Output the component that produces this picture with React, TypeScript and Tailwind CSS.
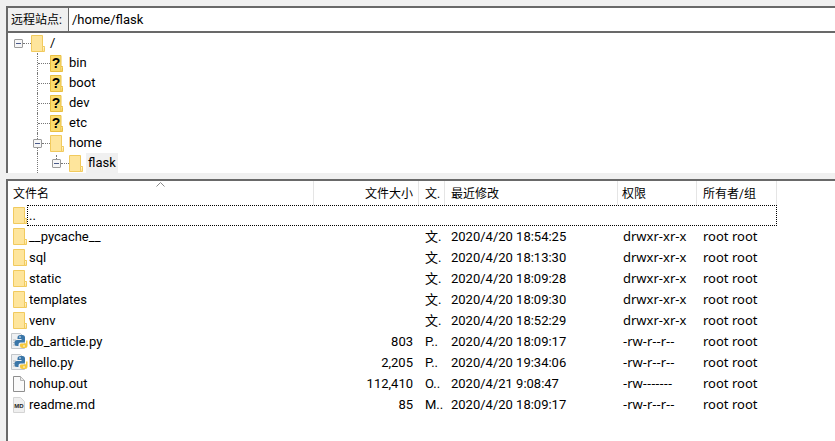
import type { ReactNode } from "react";

const uiFont = "font-['Roboto','Noto_Sans_CJK_SC',sans-serif]";
const wideFont = "font-['Noto_Sans','Noto_Sans_CJK_SC',sans-serif]";

type FileRow = {
  name: string;
  size?: string;
  type: string;
  modified?: string;
  perms?: string;
  owner?: string;
  icon: "folder" | "python" | "file" | "md";
};

const files: FileRow[] = [
  { name: "..", type: "", icon: "folder" },
  { name: "__pycache__", type: "文.", modified: "2020/4/20 18:54:25", perms: "drwxr-xr-x", owner: "root root", icon: "folder" },
  { name: "sql", type: "文.", modified: "2020/4/20 18:13:30", perms: "drwxr-xr-x", owner: "root root", icon: "folder" },
  { name: "static", type: "文.", modified: "2020/4/20 18:09:28", perms: "drwxr-xr-x", owner: "root root", icon: "folder" },
  { name: "templates", type: "文.", modified: "2020/4/20 18:09:30", perms: "drwxr-xr-x", owner: "root root", icon: "folder" },
  { name: "venv", type: "文.", modified: "2020/4/20 18:52:29", perms: "drwxr-xr-x", owner: "root root", icon: "folder" },
  { name: "db_article.py", size: "803", type: "P..", modified: "2020/4/20 18:09:17", perms: "-rw-r--r--", owner: "root root", icon: "python" },
  { name: "hello.py", size: "2,205", type: "P..", modified: "2020/4/20 19:34:06", perms: "-rw-r--r--", owner: "root root", icon: "python" },
  { name: "nohup.out", size: "112,410", type: "O..", modified: "2020/4/21 9:08:47", perms: "-rw-------", owner: "root root", icon: "file" },
  { name: "readme.md", size: "85", type: "M..", modified: "2020/4/20 18:09:17", perms: "-rw-r--r--", owner: "root root", icon: "md" },
];

function FolderIcon() {
  return (
    <svg width="14" height="17" viewBox="0 0 14 17" className="shrink-0">
      <path d="M.5.5h11v11h2v5H.5z" fill="#fee59c" stroke="#f1ca5e" />
      <path d="M11.5 16.500v-5h2" fill="#fff3cc" stroke="#f1ca5e" />
    </svg>
  );
}

function UnknownFolderIcon() {
  return (
    <svg width="13" height="17" viewBox="0 0 13 17" className="shrink-0">
      <path d="M.5.5h10.500v11h1.500v5H.5z" fill="#fbdc6e" stroke="#e9bf42" />
      <path d="M11 16.500v-5h1.500" fill="#fff3cc" stroke="#e9bf42" />
      <text x="6" y="13" textAnchor="middle" fontSize="14" fontWeight="700" fontFamily="Liberation Sans, sans-serif" fill="#000">
        ?
      </text>
    </svg>
  );
}

function PythonIcon() {
  return (
    <svg width="17" height="17" viewBox="0 0 17 17" className="shrink-0">
      <path d="M.5.500h9l4 4v11H.500z" fill="#eef0f2" stroke="#c2c6ca" />
      <path d="M2 7h3M2 9.500h2M2 12h3" stroke="#b4b8bc" />
      <path d="M6.500 9V4.500Q6.500 2 9.500 2h2Q14 2 14 4.500V8q0 1.500-2 1.500H9.500q-2 0-2 2V13H6q-2.500 0-2.500-2.500V9.500Q3.500 7 6 7h4.500V6H6.500z" fill="#3a76a8" />
      <path d="M16.500 7.500v5q0 2.500-2.500 2.500h-2.500q-2.500 0-2.500-2v-1.500q0-1 1.500-1H14q1.500 0 1-3z" fill="#f6c93c" />
      <circle cx="9" cy="4" r=".8" fill="#fff" />
      <circle cx="13" cy="13" r=".8" fill="#fff" />
    </svg>
  );
}

function PlainFileIcon() {
  return (
    <svg width="12" height="16" viewBox="0 0 12 16" className="shrink-0">
      <path d="M.5.500h7l4 4v11H.500z" fill="#fafafa" stroke="#8f8f8f" />
      <path d="M7.500.500v4h4" fill="#ececec" stroke="#b4b4b4" />
    </svg>
  );
}

function MdIcon() {
  return (
    <svg width="12" height="16" viewBox="0 0 12 16" className="shrink-0">
      <path d="M.5.500h7l4 4v11H.500z" fill="#efefef" stroke="#d4d4d4" />
      <text x="6" y="10.500" textAnchor="middle" fontSize="6" fontWeight="700" fontFamily="Liberation Sans, sans-serif" fill="#222">
        MD
      </text>
    </svg>
  );
}

function Expander() {
  return (
    <div className="relative z-10 flex h-[9px] w-[9px] shrink-0 items-center justify-center rounded-[1px] border border-[#9a9a9a] bg-[#f6f6f6]">
      <div className="h-px w-[5px] bg-[#4a5a8a]" />
    </div>
  );
}

// dotted stub running from the tree guide to the icon
function Stub({ className }: { className: string }) {
  return <div className={`h-0 shrink-0 border-t border-dotted border-[#777] ${className}`} />;
}

function TreeRow({ children, label, selected }: { children: ReactNode; label: string; selected?: boolean }) {
  return (
    <div className="relative flex h-5 items-center text-[13px] text-black">
      {children}
      <span className={`flex h-5 items-center px-[2px] ${selected ? "bg-[#f0f0f0]" : ""}`}>{label}</span>
    </div>
  );
}

function Guide() {
  return <div className="w-px shrink-0 self-stretch border-l border-dotted border-[#777]" />;
}

function RemoteTree() {
  return (
    <div className="h-[140px] shrink-0 overflow-hidden bg-white">
      <TreeRow label="/">
        <div className="ml-[6px] flex items-center">
          <Expander />
          <Stub className="w-2" />
          <FolderIcon />
          <div className="w-[3px]" />
        </div>
      </TreeRow>
      {["bin", "boot", "dev", "etc"].map((dir) => (
        <TreeRow key={dir} label={dir}>
          <div className="ml-[29px] flex items-center self-stretch">
            <Guide />
            <Stub className="w-3" />
            <UnknownFolderIcon />
            <div className="w-1" />
          </div>
        </TreeRow>
      ))}
      <TreeRow label="home">
        <div className="absolute left-[29px] top-0 h-5 border-l border-dotted border-[#777]" />
        <div className="ml-[25px] flex items-center">
          <Expander />
          <Stub className="w-2" />
          <FolderIcon />
          <div className="w-[3px]" />
        </div>
      </TreeRow>
      <TreeRow label="flask" selected>
        <div className="ml-[29px] flex items-center self-stretch">
          <Guide />
          <div className="relative ml-[14px] flex items-center">
            <div className="absolute left-1 top-0 h-[6px] border-l border-dotted border-[#777]" />
            <Expander />
            <Stub className="w-2" />
            <FolderIcon />
            <div className="w-[3px]" />
          </div>
        </div>
      </TreeRow>
    </div>
  );
}

const columns = "grid grid-cols-[306px_105px_26px_173px_79px_80px]";

function HeaderCell({ children, className }: { children: ReactNode; className: string }) {
  return <div className={`flex h-full items-center border-r border-[#e5e5e5] pt-[2px] ${className}`}>{children}</div>;
}

function FileList() {
  return (
    <div className="relative min-h-0 flex-1 bg-white text-[13px] text-black">
      <div className={`${columns} h-6 w-[769px] text-[12px]`}>
        <HeaderCell className="pl-[5px]">文件名</HeaderCell>
        <HeaderCell className="justify-end pr-[5px]">文件大小</HeaderCell>
        <HeaderCell className="pl-[6px]">文.</HeaderCell>
        <HeaderCell className="pl-[6px]">最近修改</HeaderCell>
        <HeaderCell className="pl-[4px]">权限</HeaderCell>
        <HeaderCell className="pl-[6px]">所有者/组</HeaderCell>
      </div>
      <svg width="9" height="5" viewBox="0 0 9 5" className="absolute left-[148px] top-px">
        <path d="M.5 4.500l4-4 4 4" fill="none" stroke="#8a8a8a" />
      </svg>
      {/* focus rectangle of the ".." row */}
      <div className="pointer-events-none absolute left-[19px] top-6 h-[21px] w-[750px] border border-dotted border-black" />
      {files.map((f) => (
        <div key={f.name} className={`${columns} h-[21px] w-[769px] items-center`}>
          <div className="flex items-center pl-[5px]">
            <div className="flex w-4 justify-start">
              {f.icon === "folder" && <FolderIcon />}
              {f.icon === "python" && <div className="-ml-[2px]"><PythonIcon /></div>}
              {f.icon === "file" && <PlainFileIcon />}
              {f.icon === "md" && <MdIcon />}
            </div>
            <span className="whitespace-nowrap">{f.name}</span>
          </div>
          <div className="pr-[6px] text-right">{f.size}</div>
          <div className="pl-[6px]">{f.type}</div>
          <div className="whitespace-nowrap pl-[6px]">{f.modified}</div>
          <div className={`whitespace-nowrap pl-[5px] ${wideFont}`}>{f.perms}</div>
          <div className={`whitespace-nowrap pl-[6px] ${wideFont}`}>{f.owner}</div>
        </div>
      ))}
    </div>
  );
}

export default function App() {
  return (
    <div className={`flex h-[441px] w-[835px] flex-col overflow-hidden bg-[#f0f0f0] pl-[6px] pt-[6px] ${uiFont}`}>
      <div className="flex h-[167px] shrink-0 flex-col border-l-2 border-t-2 border-[#696969]">
        <div className="flex h-[25px] shrink-0 border-b-2 border-[#696969] bg-white">
          <div className="flex w-[61px] items-center border-r border-[#696969] bg-[#f0f0f0] pl-[3px] text-[12px] text-black">
            远程站点:
          </div>
          <div className="flex items-center pl-[3px] text-[13px] text-black">/home/flask</div>
        </div>
        <RemoteTree />
      </div>
      <div className="h-[6px] shrink-0" />
      <div className="flex min-h-0 flex-1 flex-col border-l-2 border-t-2 border-[#696969]">
        <FileList />
      </div>
    </div>
  );
}
